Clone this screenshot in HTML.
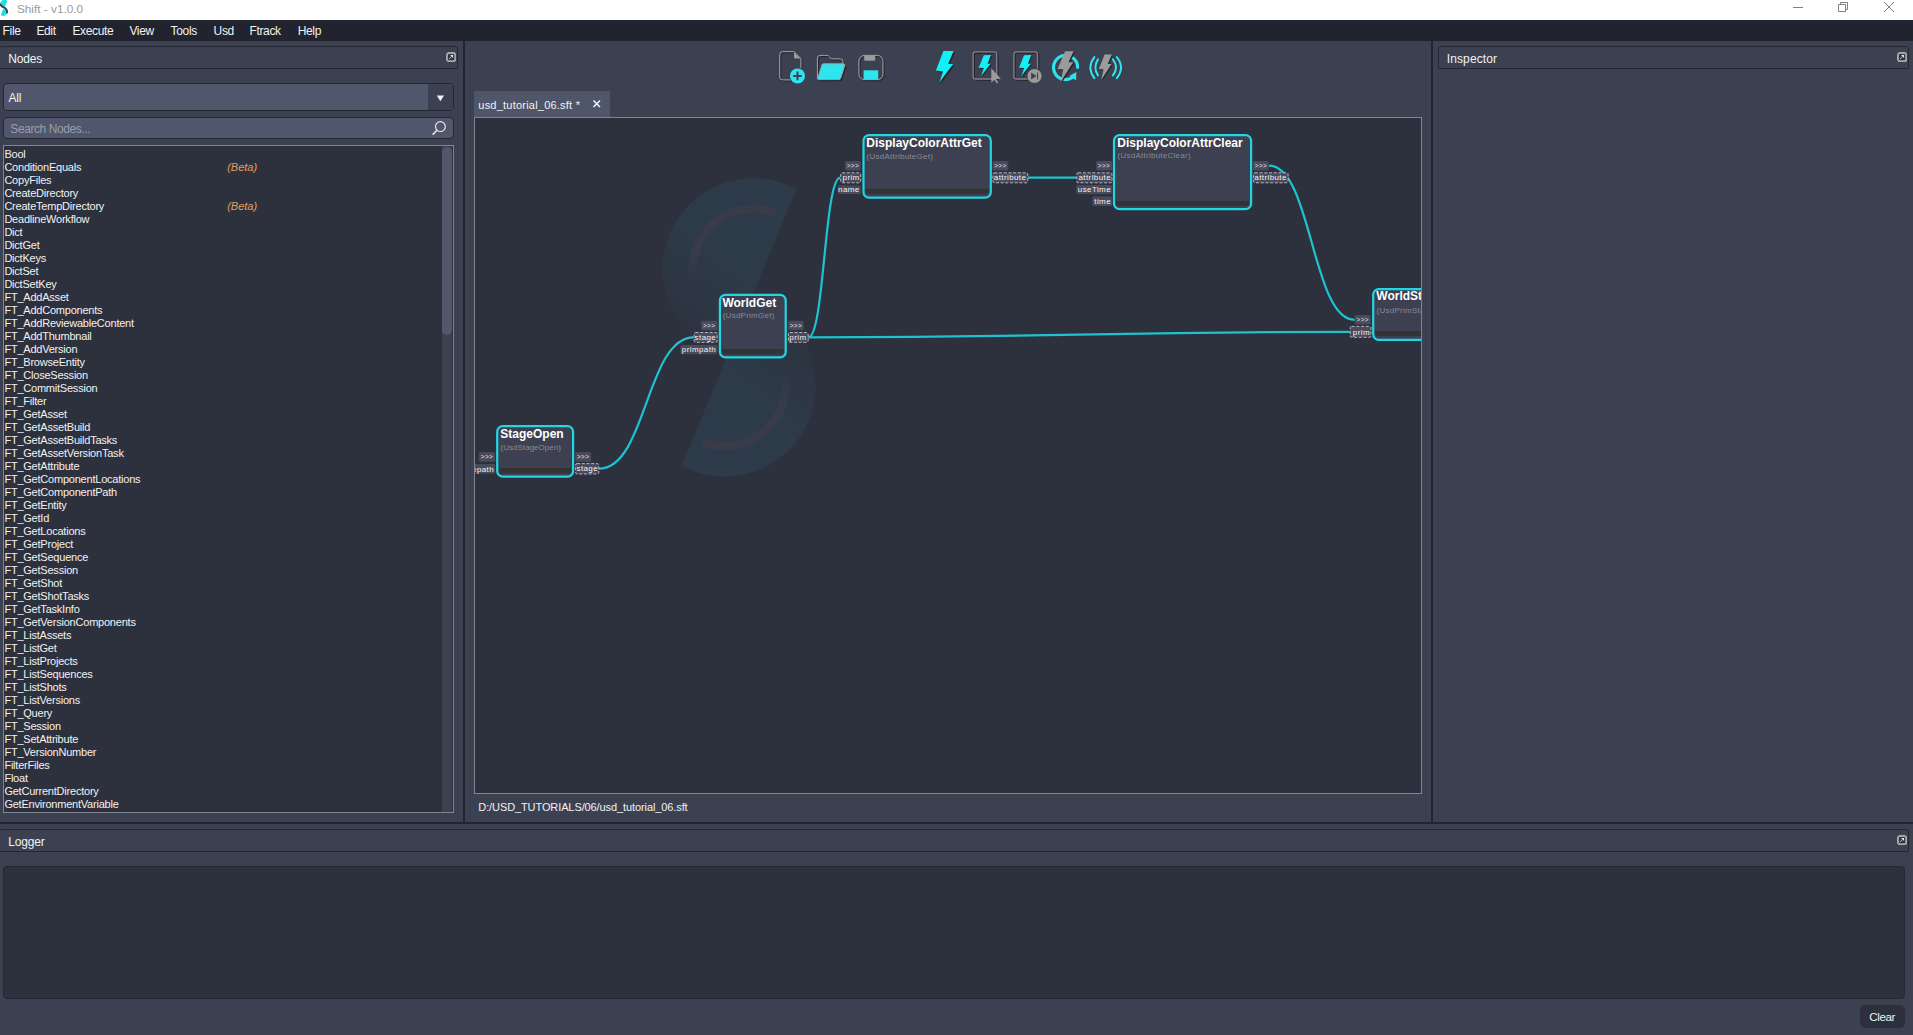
<!DOCTYPE html><html><head><meta charset='utf-8'><title>Shift - v1.0.0</title><style>
*{box-sizing:border-box;margin:0;padding:0}
html,body{width:1913px;height:1035px;overflow:hidden;background:#3c4151;}
body{position:relative;font-family:"Liberation Sans",sans-serif;color:#f2f2f2;font-size:12px;}
.abs{position:absolute}
.t{position:absolute;white-space:nowrap;line-height:1}
#titlebar{left:0;top:0;width:1913px;height:20px;background:#fff}
#menubar{left:0;top:20px;width:1913px;height:21px;background:#21242f}
.menu{font-size:12px;top:24.5px;letter-spacing:-0.35px}
.dock{border:1px solid #252832;border-radius:3px 3px 0 0;background:#3c4151}
.docktitle{font-size:12px;letter-spacing:-0.2px}
.field{background:#50566b;border:1px solid #252832;border-radius:4px}
#list{left:3px;top:145px;width:451px;height:668px;background:#2d303d;border:1px solid #80848e;overflow:hidden}
#list div{position:absolute;left:0.4px;font-size:11px;letter-spacing:-0.22px;line-height:13px;height:13px;white-space:nowrap}
#list i{position:absolute;left:222.8px;top:-0.5px;color:#e3a15a;letter-spacing:0}
.split{background:#22252f}
</style></head><body>
<div id='titlebar' class='abs'>
<svg class='abs' style='left:0;top:0' width='10' height='18' viewBox='0 0 10 18'><path d='M0 3.2 L2.6 0 H6.9 L7 1.6 L4.9 6.9 L1.2 5.6 L0 4.4 Z' fill='#1fdfe6'/><path d='M3.3 8.8 L6 10 L7.8 11.6 L7.4 13.6 L4.2 15.9 L1.4 15.7 L1 14.4 Z' fill='#1fdfe6'/><path d='M0 3.8 Q0.8 6.2 3.8 7.4 Q7.4 9 7.2 13.2' fill='none' stroke='#234a5a' stroke-width='1.9'/></svg>
<span class='t' style='left:16.9px;top:3.8px;font-size:11.8px;color:#999;letter-spacing:0px'>Shift - v1.0.0</span>
<svg class='abs' style='left:1780px;top:0' width='133' height='20' viewBox='1780 0 133 20' fill='none' stroke='#808080' stroke-width='1'><path d='M1793 7.5H1803'/><path d='M1838.5 4.5h7v7h-7z M1840.5 4.5v-2h7v7h-2'/><path d='M1884 2L1894 12M1894 2L1884 12'/></svg>
</div>
<div id='menubar' class='abs'></div>
<span class='t menu' style='left:2.6px'>File</span>
<span class='t menu' style='left:36.4px'>Edit</span>
<span class='t menu' style='left:72.4px'>Execute</span>
<span class='t menu' style='left:129.4px'>View</span>
<span class='t menu' style='left:170.6px'>Tools</span>
<span class='t menu' style='left:213.6px'>Usd</span>
<span class='t menu' style='left:249.5px'>Ftrack</span>
<span class='t menu' style='left:297.7px'>Help</span>
<div class='abs dock' style='left:-1px;top:46px;width:459px;height:23px'></div>
<span class='t docktitle' style='left:8.3px;top:53px'>Nodes</span>
<svg class='abs' style='left:446.0px;top:51.9px' width='10.2' height='10.2' viewBox='0 0 10.2 10.2'><rect x='0.95' y='0.95' width='8.3' height='8.3' rx='2.1' fill='#323544' stroke='#a7a7a7' stroke-width='1.9'/><path d='M4.1 3H7.1V6.1Z' fill='#e6e6e6'/><path d='M3.1 7L5.8 4.3' stroke='#d0d0d0' stroke-width='0.9' fill='none'/></svg>
<div class='abs field' style='left:3px;top:83px;width:451px;height:28px;overflow:hidden'><div class='abs' style='right:0;top:0;width:25px;height:28px;background:#3c4151'></div></div>
<span class='t' style='left:8.6px;top:92.3px;font-size:12px;letter-spacing:-0.3px'>All</span>
<svg class='abs' style='left:436px;top:94.6px' width='9' height='7' viewBox='0 0 9 7'><path d='M0.8 0.5H8L4.4 6.3Z' fill='#f4f4f4'/></svg>
<div class='abs field' style='left:3px;top:117px;width:451px;height:22px'></div>
<span class='t' style='left:10.3px;top:122.8px;font-size:12px;color:#9a9eaa;letter-spacing:-0.42px'>Search Nodes...</span>
<svg class='abs' style='left:430px;top:119px' width='18' height='18' viewBox='0 0 18 18' fill='none' stroke='#e8e8e8' stroke-width='1.2'><circle cx='10.4' cy='7.6' r='4.9'/><path d='M7 11.2L2.6 15.6' stroke-width='1.5'/></svg>
<div id='list' class='abs'>
<div style='top:2.1px'>Bool</div>
<div style='top:15.1px'>ConditionEquals<i>(Beta)</i></div>
<div style='top:28.1px'>CopyFiles</div>
<div style='top:41.1px'>CreateDirectory</div>
<div style='top:54.1px'>CreateTempDirectory<i>(Beta)</i></div>
<div style='top:67.1px'>DeadlineWorkflow</div>
<div style='top:80.1px'>Dict</div>
<div style='top:93.1px'>DictGet</div>
<div style='top:106.1px'>DictKeys</div>
<div style='top:119.1px'>DictSet</div>
<div style='top:132.1px'>DictSetKey</div>
<div style='top:145.1px'>FT_AddAsset</div>
<div style='top:158.1px'>FT_AddComponents</div>
<div style='top:171.1px'>FT_AddReviewableContent</div>
<div style='top:184.1px'>FT_AddThumbnail</div>
<div style='top:197.1px'>FT_AddVersion</div>
<div style='top:210.1px'>FT_BrowseEntity</div>
<div style='top:223.1px'>FT_CloseSession</div>
<div style='top:236.1px'>FT_CommitSession</div>
<div style='top:249.1px'>FT_Filter</div>
<div style='top:262.1px'>FT_GetAsset</div>
<div style='top:275.1px'>FT_GetAssetBuild</div>
<div style='top:288.1px'>FT_GetAssetBuildTasks</div>
<div style='top:301.1px'>FT_GetAssetVersionTask</div>
<div style='top:314.1px'>FT_GetAttribute</div>
<div style='top:327.1px'>FT_GetComponentLocations</div>
<div style='top:340.1px'>FT_GetComponentPath</div>
<div style='top:353.1px'>FT_GetEntity</div>
<div style='top:366.1px'>FT_GetId</div>
<div style='top:379.1px'>FT_GetLocations</div>
<div style='top:392.1px'>FT_GetProject</div>
<div style='top:405.1px'>FT_GetSequence</div>
<div style='top:418.1px'>FT_GetSession</div>
<div style='top:431.1px'>FT_GetShot</div>
<div style='top:444.1px'>FT_GetShotTasks</div>
<div style='top:457.1px'>FT_GetTaskInfo</div>
<div style='top:470.1px'>FT_GetVersionComponents</div>
<div style='top:483.1px'>FT_ListAssets</div>
<div style='top:496.1px'>FT_ListGet</div>
<div style='top:509.1px'>FT_ListProjects</div>
<div style='top:522.1px'>FT_ListSequences</div>
<div style='top:535.1px'>FT_ListShots</div>
<div style='top:548.1px'>FT_ListVersions</div>
<div style='top:561.1px'>FT_Query</div>
<div style='top:574.1px'>FT_Session</div>
<div style='top:587.1px'>FT_SetAttribute</div>
<div style='top:600.1px'>FT_VersionNumber</div>
<div style='top:613.1px'>FilterFiles</div>
<div style='top:626.1px'>Float</div>
<div style='top:639.1px'>GetCurrentDirectory</div>
<div style='top:652.1px'>GetEnvironmentVariable</div>
<div class='abs' style='left:438px;top:0;width:10px;height:666px;background:#3c4151;letter-spacing:0'></div>
<div class='abs' style='left:438px;top:1px;width:10px;height:188px;background:#51576c;border-radius:5px'></div>
</div>
<div class='abs split' style='left:463px;top:41px;width:2px;height:782px'></div>
<div class='abs split' style='left:1431px;top:41px;width:2px;height:782px'></div>
<div class='abs split' style='left:0;top:822px;width:1913px;height:2px'></div>
<svg class='abs' style='left:760px;top:44px' width='380' height='50' viewBox='760 44 380 50'>
<g transform='translate(1.2,1.2)'><path d='M782.7 51.6 H794 L800.9 58.4 V77 Q800.9 79.9 798 79.9 H782.7 Q779.7 79.9 779.7 77 V54.6 Q779.7 51.6 782.7 51.6 Z' fill='none' stroke='#23252f' stroke-width='1'/></g><path d='M782.7 51.6 H794 L800.9 58.4 V77 Q800.9 79.9 798 79.9 H782.7 Q779.7 79.9 779.7 77 V54.6 Q779.7 51.6 782.7 51.6 Z' fill='none' stroke='#a49e9f' stroke-width='1'/><path d='M794 51.9 L800.8 58.5 H795.2 Q794 58.5 794 57.3 Z' fill='#9b9b9b'/>
<circle cx='797.5' cy='75.9' r='8.3' fill='#3c4151'/>
<circle cx='797.5' cy='75.9' r='7.5' fill='#2ee5ed'/>
<path d='M793.2 75.9 H801.8 M797.5 71.6 V80.2' stroke='#3c4151' stroke-width='2' fill='none'/>
<g transform='translate(1.2,1.2)'><path d='M817.4 78 V58 Q817.4 55.4 820 55.4 H827.2 Q828.6 55.4 829.4 56.6 L830.4 58.2 Q830.9 58.8 832 58.8 H840.2 Q842.9 58.8 842.9 61.4 V63.6' fill='none' stroke='#23252f' stroke-width='1'/><path d='M823.4 63.8 H843.6 Q845.3 63.8 844.8 65.4 L840.6 78.4 Q840.2 79.6 838.9 79.6 H818.6 Q817.2 79.6 817.7 78.2 L822 64.8 Q822.4 63.8 823.4 63.8 Z' fill='#23252f' stroke='#23252f' stroke-width='1'/></g><path d='M817.4 78 V58 Q817.4 55.4 820 55.4 H827.2 Q828.6 55.4 829.4 56.6 L830.4 58.2 Q830.9 58.8 832 58.8 H840.2 Q842.9 58.8 842.9 61.4 V63.6' fill='none' stroke='#a49e9f' stroke-width='1'/><path d='M823.4 63.8 H843.6 Q845.3 63.8 844.8 65.4 L840.6 78.4 Q840.2 79.6 838.9 79.6 H818.6 Q817.2 79.6 817.7 78.2 L822 64.8 Q822.4 63.8 823.4 63.8 Z' fill='#2ee5ed' stroke='#a49e9f' stroke-width='1'/>
<g transform='translate(1.2,1.2)'><rect x='858.9' y='55.4' width='24' height='24.2' rx='5.5' fill='none' stroke='#23252f' stroke-width='1'/></g><rect x='858.9' y='55.4' width='24' height='24.2' rx='5.5' fill='none' stroke='#a49e9f' stroke-width='1'/><path d='M864.2 55.4 H875.2 V59.4 Q875.2 60.8 873.8 60.8 H865.6 Q864.2 60.8 864.2 59.4 Z' fill='#9b9b9b'/><rect x='863.6' y='70.3' width='14.6' height='9.3' fill='#2ee5ed'/>
<polygon points='944.8,52.5 955.0,52.5 949.5,65.5 954.6,65.5 941.0,83.5 944.4,72.9 937.3,71.9' fill='#23252f'/>
<polygon points='943.4,51.1 953.6,51.1 948.1,64.1 953.2,64.1 939.6,82.1 943,71.5 935.9,70.5' fill='#12eff5'/>
<g transform='translate(1.2,1.2)'><rect x='973.1' y='51.9' width='23.6' height='27.1' rx='2.6' fill='none' stroke='#23252f' stroke-width='1.3'/></g><rect x='973.1' y='51.9' width='23.6' height='27.1' rx='2.6' fill='none' stroke='#887e87' stroke-width='1.3'/>
<polygon points='984.9,56.300000000000004 992.1,56.0 988.7,64.8 991.7,64.8 982.2,77.1 984.9,69.19999999999999 979.8000000000001,68.89999999999999' fill='#23252f'/>
<polygon points='983.8,55.2 991,54.9 987.6,63.7 990.6,63.7 981.1,76 983.8,68.1 978.7,67.8' fill='#12eff5'/>
<polygon points='991.3,68.2 991.3,82.5 994.4,80 997.1,83.6 998.3,82.8 996.1,79 1000.9,78.7' fill='#9b9b9b'/>
<g transform='translate(1.2,1.2)'><rect x='1013.9' y='51.9' width='23.6' height='27.1' rx='2.6' fill='none' stroke='#23252f' stroke-width='1.3'/></g><rect x='1013.9' y='51.9' width='23.6' height='27.1' rx='2.6' fill='none' stroke='#887e87' stroke-width='1.3'/>
<polygon points='1025.1999999999998,56.300000000000004 1032.3999999999999,56.0 1029.0,64.8 1032.0,64.8 1022.5,77.1 1025.1999999999998,69.19999999999999 1020.1,68.89999999999999' fill='#23252f'/>
<polygon points='1024.1,55.2 1031.3,54.9 1027.9,63.7 1030.9,63.7 1021.4,76 1024.1,68.1 1019.0,67.8' fill='#12eff5'/>
<circle cx='1034.5' cy='76' r='7.9' fill='#3c4151'/>
<circle cx='1034.5' cy='76' r='7.1' fill='#9b9b9b'/>
<path d='M1031.1 72.6 L1036.6 76 L1031.1 79.4 Z' fill='#3c4151'/><path d='M1037.6 72.6 V79.4' stroke='#3c4151' stroke-width='1'/>
<path d='M1077.60 68.55 A12.05 12.05 0 1 0 1072.68 77.25' fill='none' stroke='#2ee5ed' stroke-width='3.1'/>
<polygon points='1076.3,72 1076.1,80.3 1069.4,76' fill='#2ee5ed'/>
<polygon points='1066.3,52.3 1074.9,52.3 1069.7,63.3 1074.4,63.3 1061.6000000000001,83.2 1064.5,70.6 1058.7,70.1' fill='#23252f'/>
<polygon points='1065.1,51.3 1073.7,51.3 1068.5,62.3 1073.2,62.3 1060.4,82.2 1063.3,69.6 1057.5,69.1' fill='#9b9b9b'/>
<path d='M1094.4 57.1 Q1086.4 67.4 1094.4 78.2' fill='none' stroke='#2ee5ed' stroke-width='2' stroke-linecap='round'/>
<path d='M1098 59.4 Q1092.8 67.5 1098 75.4' fill='none' stroke='#2ee5ed' stroke-width='2' stroke-linecap='round'/>
<path d='M1116.8 57.1 Q1125.2 67.4 1116.8 78.2' fill='none' stroke='#2ee5ed' stroke-width='2' stroke-linecap='round'/>
<path d='M1112.9 59.4 Q1119.3 67.5 1112.9 75.4' fill='none' stroke='#2ee5ed' stroke-width='2' stroke-linecap='round'/>
<polygon points='1105.6999999999998,55.5 1113.0,55.5 1108.8,64.9 1112.6999999999998,64.9 1102.3,81.1 1104.6,70.6 1099.8999999999999,70.1' fill='#23252f'/>
<polygon points='1104.6,54.5 1111.9,54.5 1107.7,63.9 1111.6,63.9 1101.2,80.1 1103.5,69.6 1098.8,69.1' fill='#9b9b9b'/>
</svg>
<div class='abs' style='left:474px;top:91px;width:136px;height:27px;background:#4f566a'></div>
<span class='t' style='left:478.3px;top:99.5px;font-size:11px;letter-spacing:0.22px'>usd_tutorial_06.sft *</span>
<svg class='abs' style='left:592px;top:99px' width='10' height='10' viewBox='0 0 10 10'><path d='M1.5 1.5L8 8M8 1.5L1.5 8' stroke='#f4f4f4' stroke-width='1.5'/></svg>
<div class='abs' style='left:474px;top:117px;width:948px;height:677px;background:#2d303d;border:1px solid #80848e;overflow:hidden'>
<svg class='abs' style='left:0;top:0' width='946' height='675' viewBox='475 118 946 675' font-family='"Liberation Sans",sans-serif'>
<defs><linearGradient id='lgT' x1='800' y1='200' x2='668' y2='345' gradientUnits='userSpaceOnUse'><stop offset='0' stop-color='#2d3b4a'/><stop offset='0.5' stop-color='#2d3a48'/><stop offset='0.8' stop-color='#2d3542'/><stop offset='1' stop-color='#2d313e'/></linearGradient><linearGradient id='lgB' x1='678' y1='455' x2='810' y2='310' gradientUnits='userSpaceOnUse'><stop offset='0' stop-color='#2d3b4a'/><stop offset='0.5' stop-color='#2d3a48'/><stop offset='0.8' stop-color='#2d3542'/><stop offset='1' stop-color='#2d313e'/></linearGradient><linearGradient id='aT' x1='0' y1='250' x2='0' y2='282' gradientUnits='userSpaceOnUse'><stop offset='0' stop-color='#393b49'/><stop offset='1' stop-color='#393b49' stop-opacity='0'/></linearGradient><linearGradient id='aB' x1='0' y1='405' x2='0' y2='373' gradientUnits='userSpaceOnUse'><stop offset='0' stop-color='#393b49'/><stop offset='1' stop-color='#393b49' stop-opacity='0'/></linearGradient><clipPath id='cT'><polygon points='600,100 833.1,100 681.8,466.1 600,466'/></clipPath><clipPath id='cB'><polygon points='900,560 645.0,555 796.2,188.9 900,188'/></clipPath></defs>
<g clip-path='url(#cT)'><circle cx='753.4' cy='269.3' r='91' fill='url(#lgT)'/><path d='M772.6 211.9 A60.5 60.5 0 0 0 696.5 290' fill='none' stroke='url(#aT)' stroke-width='8' stroke-linecap='round'/></g>
<g clip-path='url(#cB)'><circle cx='724.6' cy='385.7' r='91' fill='url(#lgB)'/><path d='M705.4 443.1 A60.5 60.5 0 0 0 781.5 365' fill='none' stroke='url(#aB)' stroke-width='8' stroke-linecap='round'/></g>
<path d='M599 468.6 C646.4 468.6 646.4 337.3 693.7 337.3' fill='none' stroke='#1fc3cf' stroke-width='2.2'/>
<path d='M808.4 337.3 C824.3 337.3 824.3 177.7 840.3 177.7' fill='none' stroke='#1fc3cf' stroke-width='2.2'/>
<path d='M808.4 337.3 C1079.1 337.3 1079.1 331.8 1349.8 331.8' fill='none' stroke='#1fc3cf' stroke-width='2.2'/>
<path d='M1028 177.6 C1052.2 177.6 1052.2 177.6 1076.3 177.6' fill='none' stroke='#1fc3cf' stroke-width='2.2'/>
<path d='M1268.9 165.6 C1311.8 165.6 1311.8 319.8 1354.7 319.8' fill='none' stroke='#1fc3cf' stroke-width='2.2'/>
<rect x='478.8' y='452.0' width='16.3' height='9.7' rx='1.5' fill='#4a4a5d'/><text x='487.0' y='459.0' font-size='6.4' text-anchor='middle' fill='#e8e8ee' letter-spacing='0.4'>&gt;&gt;&gt;</text>
<rect x='455.0' y='464.0' width='40.1' height='9.7' rx='1.5' fill='#4a4a5d'/><text x='494.1' y='471.5' font-size='8.0' text-anchor='end' fill='#f4f4f6' letter-spacing='0.4'>filepath</text>
<rect x='575.2' y='452.0' width='15.9' height='9.7' rx='1.5' fill='#4a4a5d'/><text x='583.2' y='459.0' font-size='6.4' text-anchor='middle' fill='#e8e8ee' letter-spacing='0.4'>&gt;&gt;&gt;</text>
<rect x='575.6' y='463.6' width='23.2' height='10.4' rx='1.5' fill='#4a4a5d' stroke='#c4c4c8' stroke-width='0.9' stroke-dasharray='3 1.7'/><text x='576.5' y='471.4' font-size='8.0' fill='#f4f4f6' letter-spacing='0.4'>stage</text>
<rect x='497.2' y='426.1' width='75.9' height='50.6' rx='5.5' fill='#3c4050' stroke='#22d6e2' stroke-width='2.2'/><path d='M499.3 468.0 H571.0 V470.7 Q571.0 473.2 568.2 473.2 H502.1 Q499.3 473.2 499.3 470.7 Z' fill='#333335'/><text x='500.3' y='437.9' font-size='12' font-weight='bold' fill='#fff' letter-spacing='0.0'>StageOpen</text><text x='500.6' y='449.7' font-size='8' fill='#8b8a95' letter-spacing='0.02'>(UsdStageOpen)</text>
<rect x='701.2' y='320.8' width='16.0' height='9.4' rx='1.5' fill='#4a4a5d'/><text x='709.2' y='327.6' font-size='6.4' text-anchor='middle' fill='#e8e8ee' letter-spacing='0.4'>&gt;&gt;&gt;</text>
<rect x='694.1' y='332.5' width='23.1' height='9.8' rx='1.5' fill='#4a4a5d' stroke='#c4c4c8' stroke-width='0.9' stroke-dasharray='3 1.7'/><text x='716.2' y='340.0' font-size='8.0' text-anchor='end' fill='#f4f4f6' letter-spacing='0.4'>stage</text>
<rect x='680.4' y='345.0' width='36.8' height='9.3' rx='1.5' fill='#4a4a5d'/><text x='716.2' y='352.3' font-size='8.0' text-anchor='end' fill='#f4f4f6' letter-spacing='0.4'>primpath</text>
<rect x='788.0' y='320.8' width='15.7' height='9.4' rx='1.5' fill='#4a4a5d'/><text x='795.9' y='327.6' font-size='6.4' text-anchor='middle' fill='#e8e8ee' letter-spacing='0.4'>&gt;&gt;&gt;</text>
<rect x='788.4' y='332.5' width='19.8' height='9.8' rx='1.5' fill='#4a4a5d' stroke='#c4c4c8' stroke-width='0.9' stroke-dasharray='3 1.7'/><text x='789.3' y='340.0' font-size='8.0' fill='#f4f4f6' letter-spacing='0.4'>prim</text>
<rect x='719.9' y='294.9' width='65.8' height='62.5' rx='5.5' fill='#3c4050' stroke='#22d6e2' stroke-width='2.2'/><path d='M722.0 349.0 H783.6 V351.8 Q783.6 354.3 780.8 354.3 H724.8 Q722.0 354.3 722.0 351.8 Z' fill='#333335'/><text x='722.4' y='307' font-size='12' font-weight='bold' fill='#fff' letter-spacing='0.0'>WorldGet</text><text x='722.6999999999999' y='317.7' font-size='8' fill='#8b8a95' letter-spacing='0.25'>(UsdPrimGet)</text>
<rect x='845.0' y='161.1' width='15.7' height='9.3' rx='1.5' fill='#4a4a5d'/><text x='852.9' y='167.8' font-size='6.4' text-anchor='middle' fill='#e8e8ee' letter-spacing='0.4'>&gt;&gt;&gt;</text>
<rect x='840.7' y='172.8' width='20.0' height='10.0' rx='1.5' fill='#4a4a5d' stroke='#c4c4c8' stroke-width='0.9' stroke-dasharray='3 1.7'/><text x='859.7' y='180.4' font-size='8.0' text-anchor='end' fill='#f4f4f6' letter-spacing='0.4'>prim</text>
<rect x='837.8' y='185.5' width='22.9' height='8.5' rx='1.5' fill='#4a4a5d'/><text x='859.7' y='192.4' font-size='8.0' text-anchor='end' fill='#f4f4f6' letter-spacing='0.4'>name</text>
<rect x='992.5' y='161.1' width='15.7' height='9.3' rx='1.5' fill='#4a4a5d'/><text x='1000.4' y='167.8' font-size='6.4' text-anchor='middle' fill='#e8e8ee' letter-spacing='0.4'>&gt;&gt;&gt;</text>
<rect x='992.9' y='172.8' width='34.9' height='10.0' rx='1.5' fill='#4a4a5d' stroke='#c4c4c8' stroke-width='0.9' stroke-dasharray='3 1.7'/><text x='993.8' y='180.4' font-size='8.0' fill='#f4f4f6' letter-spacing='0.4'>attribute</text>
<rect x='863.5' y='135.1' width='127.3' height='62.6' rx='5.5' fill='#3c4050' stroke='#22d6e2' stroke-width='2.2'/><path d='M865.6 188.7 H988.7 V191.5 Q988.7 194.0 985.9 194.0 H868.4 Q865.6 194.0 865.6 191.5 Z' fill='#333335'/><text x='866.3' y='147' font-size='12' font-weight='bold' fill='#fff' letter-spacing='0.0'>DisplayColorAttrGet</text><text x='866.5999999999999' y='158.8' font-size='8' fill='#8b8a95' letter-spacing='0.25'>(UsdAttributeGet)</text>
<rect x='1096.1' y='161.0' width='15.9' height='9.4' rx='1.5' fill='#4a4a5d'/><text x='1104.0' y='167.8' font-size='6.4' text-anchor='middle' fill='#e8e8ee' letter-spacing='0.4'>&gt;&gt;&gt;</text>
<rect x='1076.7' y='172.8' width='35.3' height='10.0' rx='1.5' fill='#4a4a5d' stroke='#c4c4c8' stroke-width='0.9' stroke-dasharray='3 1.7'/><text x='1111.0' y='180.4' font-size='8.0' text-anchor='end' fill='#f4f4f6' letter-spacing='0.4'>attribute</text>
<rect x='1076.3' y='185.0' width='35.7' height='9.0' rx='1.5' fill='#4a4a5d'/><text x='1111.0' y='192.1' font-size='8.0' text-anchor='end' fill='#f4f4f6' letter-spacing='0.4'>useTime</text>
<rect x='1092.3' y='196.5' width='19.7' height='9.5' rx='1.5' fill='#4a4a5d'/><text x='1111.0' y='203.9' font-size='8.0' text-anchor='end' fill='#f4f4f6' letter-spacing='0.4'>time</text>
<rect x='1253.0' y='161.0' width='15.9' height='9.4' rx='1.5' fill='#4a4a5d'/><text x='1261.0' y='167.8' font-size='6.4' text-anchor='middle' fill='#e8e8ee' letter-spacing='0.4'>&gt;&gt;&gt;</text>
<rect x='1253.4' y='172.8' width='34.7' height='10.0' rx='1.5' fill='#4a4a5d' stroke='#c4c4c8' stroke-width='0.9' stroke-dasharray='3 1.7'/><text x='1254.3' y='180.4' font-size='8.0' fill='#f4f4f6' letter-spacing='0.4'>attribute</text>
<rect x='1114.0' y='135.1' width='137.1' height='74.1' rx='5.5' fill='#3c4050' stroke='#22d6e2' stroke-width='2.2'/><path d='M1116.1 200.9 H1249.0 V203.4 Q1249.0 205.9 1246.2 205.9 H1118.9 Q1116.1 205.9 1116.1 203.4 Z' fill='#333335'/><text x='1117.3' y='147' font-size='12' font-weight='bold' fill='#fff' letter-spacing='0.0'>DisplayColorAttrClear</text><text x='1117.6' y='158.2' font-size='8' fill='#8b8a95' letter-spacing='0.25'>(UsdAttributeClear)</text>
<rect x='1354.7' y='315.0' width='16.1' height='9.6' rx='1.5' fill='#4a4a5d'/><text x='1362.8' y='321.9' font-size='6.4' text-anchor='middle' fill='#e8e8ee' letter-spacing='0.4'>&gt;&gt;&gt;</text>
<rect x='1350.2' y='326.4' width='20.8' height='10.9' rx='1.5' fill='#4a4a5d' stroke='#c4c4c8' stroke-width='0.9' stroke-dasharray='3 1.7'/><text x='1370.0' y='334.5' font-size='8.0' text-anchor='end' fill='#f4f4f6' letter-spacing='0.4'>prim</text>
<rect x='1373.2' y='289.1' width='95.7' height='50.7' rx='5.5' fill='#3c4050' stroke='#22d6e2' stroke-width='2.2'/><path d='M1375.3 331.0 H1466.8 V333.6 Q1466.8 336.1 1464.0 336.1 H1378.1 Q1375.3 336.1 1375.3 333.6 Z' fill='#333335'/><text x='1376.3' y='300.3' font-size='12' font-weight='bold' fill='#fff' letter-spacing='0.0'>WorldStage</text><text x='1376.6' y='312.7' font-size='8' fill='#8b8a95' letter-spacing='0.25'>(UsdPrimStage)</text>
</svg>
</div>
<span class='t' style='left:478.3px;top:801.6px;font-size:11px;letter-spacing:-0.1px'>D:/USD_TUTORIALS/06/usd_tutorial_06.sft</span>
<div class='abs dock' style='left:1438px;top:46px;width:471px;height:23px'></div>
<span class='t docktitle' style='left:1446.8px;top:53px;letter-spacing:0.1px'>Inspector</span>
<svg class='abs' style='left:1896.9px;top:51.85px' width='10.2' height='10.2' viewBox='0 0 10.2 10.2'><rect x='0.95' y='0.95' width='8.3' height='8.3' rx='2.1' fill='#323544' stroke='#a7a7a7' stroke-width='1.9'/><path d='M4.1 3H7.1V6.1Z' fill='#e6e6e6'/><path d='M3.1 7L5.8 4.3' stroke='#d0d0d0' stroke-width='0.9' fill='none'/></svg>
<div class='abs dock' style='left:-1px;top:829px;width:1910px;height:23px'></div>
<span class='t docktitle' style='left:8.3px;top:836px'>Logger</span>
<svg class='abs' style='left:1896.9px;top:834.85px' width='10.2' height='10.2' viewBox='0 0 10.2 10.2'><rect x='0.95' y='0.95' width='8.3' height='8.3' rx='2.1' fill='#323544' stroke='#a7a7a7' stroke-width='1.9'/><path d='M4.1 3H7.1V6.1Z' fill='#e6e6e6'/><path d='M3.1 7L5.8 4.3' stroke='#d0d0d0' stroke-width='0.9' fill='none'/></svg>
<div class='abs' style='left:3px;top:866px;width:1902px;height:133px;background:#2d303d;border:1px solid #252832;border-radius:4px'></div>
<div class='abs' style='left:1860px;top:1005px;width:45px;height:23px;background:#2c2f3c;border-radius:5px'></div>
<span class='t' style='left:1869.3px;top:1011px;font-size:11.6px;letter-spacing:-0.42px'>Clear</span>
</body></html>
